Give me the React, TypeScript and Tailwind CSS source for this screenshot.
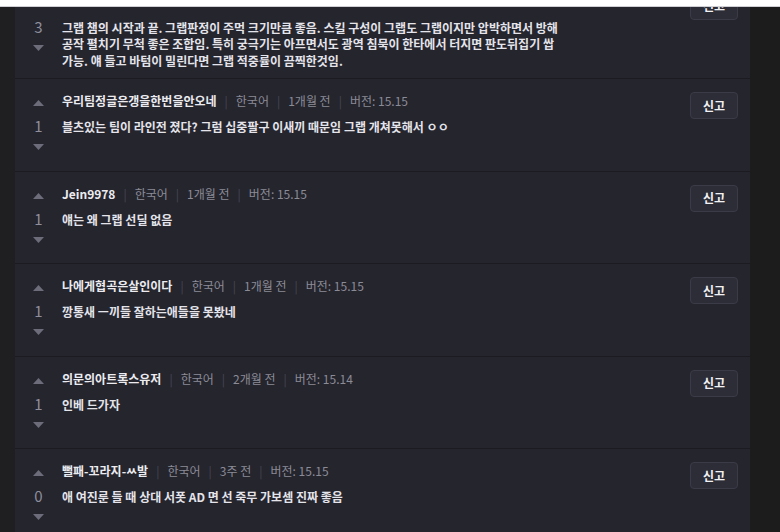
import React from "react";

type Comment = {
  id: number;
  user: string;
  lang: string;
  time: string;
  version: string;
  votes: number;
  lines: string[];
};

// first entry is scrolled mostly out of view, so its header is not drawn
const COMMENTS: Comment[] = [
  {
    id: 1,
    user: "",
    lang: "한국어",
    time: "1개월 전",
    version: "15.15",
    votes: 3,
    lines: [
      "그랩 챔의 시작과 끝. 그랩판정이 주먹 크기만큼 좋음. 스킬 구성이 그랩도 그랩이지만 압박하면서 방해",
      "공작 펼치기 무척 좋은 조합임. 특히 궁극기는 아프면서도 광역 침묵이 한타에서 터지면 판도뒤집기 쌉",
      "가능. 얘 들고 바텀이 밀린다면 그랩 적중률이 끔찍한것임.",
    ],
  },
  {
    id: 2,
    user: "우리팀정글은갱을한번을안오네",
    lang: "한국어",
    time: "1개월 전",
    version: "15.15",
    votes: 1,
    lines: ["블츠있는 팀이 라인전 졌다? 그럼 십중팔구 이새끼 때문임 그랩 개쳐못해서 ㅇㅇ"],
  },
  {
    id: 3,
    user: "Jein9978",
    lang: "한국어",
    time: "1개월 전",
    version: "15.15",
    votes: 1,
    lines: ["얘는 왜 그랩 선딜 없음"],
  },
  {
    id: 4,
    user: "나에게협곡은살인이다",
    lang: "한국어",
    time: "1개월 전",
    version: "15.15",
    votes: 1,
    lines: ["깡통새 ㅡ끼들 잘하는애들을 못봤네"],
  },
  {
    id: 5,
    user: "의문의아트록스유저",
    lang: "한국어",
    time: "2개월 전",
    version: "15.14",
    votes: 1,
    lines: ["인베 드가자"],
  },
  {
    id: 6,
    user: "뻘패-꼬라지-ㅆ발",
    lang: "한국어",
    time: "3주 전",
    version: "15.15",
    votes: 0,
    lines: ["애 여진룬 들 때 상대 서폿 AD 면 선 죽무 가보셈 진짜 좋음"],
  },
];

function Arrow({ down }: { down?: boolean }) {
  return (
    <svg width="11" height="6" viewBox="0 0 11 6" className="block">
      {down ? (
        <polygon points="0,0 11,0 5.5,6" fill="#6c6c7a" />
      ) : (
        <polygon points="0,6 11,6 5.5,0" fill="#6c6c7a" />
      )}
    </svg>
  );
}

function Sep() {
  return <span className="mx-[8px] text-[#454552]">|</span>;
}

function CommentRow({ c, first }: { c: Comment; first?: boolean }) {
  return (
    <div
      className={
        "flex border-b border-[#1b1b21] pt-[13px] pb-[12px] pr-[12px] " +
        (first ? "-mt-[27.5px]" : "")
      }
    >
      <div className="flex h-[66.5px] w-[47px] shrink-0 flex-col items-center pt-[8px]">
        {first ? <div className="h-[6px]" /> : <Arrow />}
        <div className="mt-[10px] h-[20px] text-[15px] leading-[20px] text-[#8e8e9c]">
          {c.votes}
        </div>
        <div className="mt-[8px]">
          <Arrow down />
        </div>
      </div>
      <div className="-mt-[1px] -mb-[3px] min-w-0 flex-1">
        {c.user ? (
          <div className="flex h-[19px] items-center text-[12px] leading-[19px] text-[#8b8b96]">
            <span className="font-bold text-[#ececf0]">{c.user}</span>
            <Sep />
            <span>{c.lang}</span>
            <Sep />
            <span>{c.time}</span>
            <Sep />
            <span>버전: {c.version}</span>
          </div>
        ) : (
          <div className="h-[19px]" />
        )}
        <div className="mt-[9px] text-[12px] font-bold leading-[16.5px] text-[#e4e4ea]">
          {c.lines.map((l, i) => (
            <div key={i} className="whitespace-nowrap">
              {l}
            </div>
          ))}
        </div>
      </div>
      <button className="h-[27px] w-[48px] shrink-0 rounded-[4px] border border-[#3a3b46] bg-[#2c2d37] text-[12px] font-bold text-[#f2f2f5]">
        신고
      </button>
    </div>
  );
}

export default function App() {
  return (
    <div
      className="flex h-[532px] w-[780px] flex-col overflow-hidden bg-[#1c1c1d]"
      style={{ fontFamily: '"Noto Sans CJK KR", "Noto Sans", sans-serif' }}
    >
      <div className="relative z-10 h-[7px] shrink-0 border-b border-[#cfcfd4] bg-white" />
      <div className="flex min-h-0 flex-1">
        <div className="w-[15px] shrink-0 bg-[#1f1f22]" />
        <div className="w-[735px] shrink-0 bg-[#25252e]">
          {COMMENTS.map((c, i) => (
            <CommentRow key={c.id} c={c} first={i === 0} />
          ))}
        </div>
        <div className="flex-1 bg-[#1c1c1c]" />
      </div>
    </div>
  );
}
